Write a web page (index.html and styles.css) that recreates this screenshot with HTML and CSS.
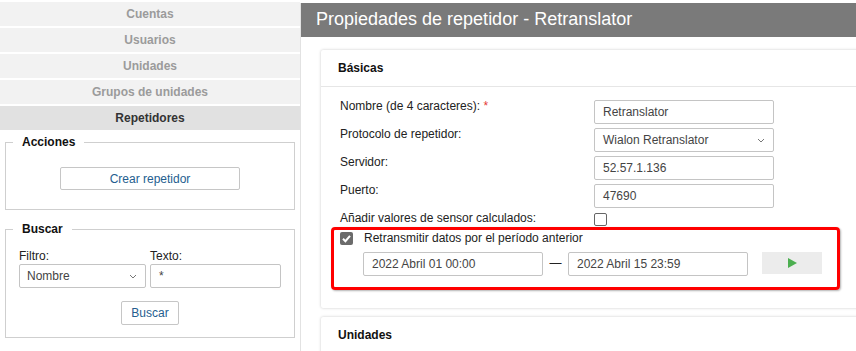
FILE: index.html
```html
<!DOCTYPE html>
<html lang="es">
<head>
    <meta charset="UTF-8">
    <title>Propiedades de repetidor - Retranslator</title>
    <link rel="stylesheet" href="styles.css">
</head>
<body>

<!-- panel izquierdo -->
<div class="sidebar">
    <div class="nav-item">Cuentas</div>
    <div class="nav-item">Usuarios</div>
    <div class="nav-item">Unidades</div>
    <div class="nav-item">Grupos de unidades</div>
    <div class="nav-item active">Repetidores</div>

    <fieldset class="box box-actions">
        <legend>Acciones</legend>
        <div class="box-center">
            <button type="button" class="btn btn-create">Crear repetidor</button>
        </div>
    </fieldset>

    <fieldset class="box box-search">
        <legend>Buscar</legend>
        <div class="search-fields">
            <div class="search-col">
                <label>Filtro:</label>
                <div class="select select-filter">
                    <span>Nombre</span>
                    <svg width="8" height="5" viewBox="0 0 8 5"><path d="M1 1l3 3 3-3" fill="none" stroke="#777" stroke-width="1"/></svg>
                </div>
            </div>
            <div class="search-col">
                <label>Texto:</label>
                <div class="input input-text">*</div>
            </div>
        </div>
        <div class="box-center search-actions">
            <button type="button" class="btn">Buscar</button>
        </div>
    </fieldset>
</div>

<!-- panel principal -->
<div class="main">
    <div class="main-header">Propiedades de repetidor - Retranslator</div>

    <div class="main-body">
        <div class="card">
            <div class="card-header">Básicas</div>
            <div class="card-body">
                <div class="row">
                    <div class="row-label">Nombre (de 4 caracteres): <span class="required">*</span></div>
                    <div class="input">Retranslator</div>
                </div>
                <div class="row">
                    <div class="row-label">Protocolo de repetidor:</div>
                    <div class="select">
                        <span>Wialon Retranslator</span>
                        <svg width="8" height="5" viewBox="0 0 8 5"><path d="M1 1l3 3 3-3" fill="none" stroke="#777" stroke-width="1"/></svg>
                    </div>
                </div>
                <div class="row">
                    <div class="row-label">Servidor:</div>
                    <div class="input">52.57.1.136</div>
                </div>
                <div class="row">
                    <div class="row-label">Puerto:</div>
                    <div class="input">47690</div>
                </div>
                <div class="row row-check">
                    <div class="row-label">Añadir valores de sensor calculados:</div>
                    <span class="checkbox"></span>
                </div>

                <!-- período anterior -->
                <div class="highlight">
                    <div class="check-line">
                        <span class="checkbox checked">
                            <svg width="13" height="13" viewBox="0 0 13 13"><path d="M3 6.8l2.4 2.4 4.6-5.4" fill="none" stroke="#fff" stroke-width="2"/></svg>
                        </span>
                        <span class="check-text">Retransmitir datos por el período anterior</span>
                    </div>
                    <div class="period">
                        <div class="input">2022 Abril 01 00:00</div>
                        <span class="dash">—</span>
                        <div class="input">2022 Abril 15 23:59</div>
                        <button type="button" class="play">
                            <svg width="9" height="10" viewBox="0 0 9 10"><path d="M0 0l9 5-9 5z" fill="#4caf50"/></svg>
                        </button>
                    </div>
                </div>
            </div>
        </div>

        <div class="card">
            <div class="card-header">Unidades</div>
        </div>
    </div>
</div>

</body>
</html>
```
FILE: styles.css
```css
body {
    margin: 0;
    display: flex;
    align-items: flex-start;
    height: 351px;
    overflow: hidden;
    font-family: "Liberation Sans", Arial, sans-serif;
    font-size: 12px;
    color: #222;
    background-color: #fff;
}
.sidebar {
    width: 300px;
    flex-shrink: 0;
    padding-top: 2px;
}
.nav-item {
    height: 24px;
    line-height: 24px;
    margin-bottom: 2px;
    background-color: #f2f2f2;
    color: #9b9b9b;
    font-weight: bold;
    text-align: center;
}
.nav-item.active {
    background-color: #e1e1e1;
    color: #333;
}
.box {
    margin: 0 5px;
    border: 1px solid #cfcfcf;
    padding: 0 13px;
    min-width: 0;
}
.box legend {
    margin-left: -6px;
    padding: 0 9px;
    font-weight: bold;
    line-height: 14px;
    color: #111;
}
.box-center {
    text-align: center;
}
.box-actions {
    margin-top: 5px;
    padding-top: 18px;
    padding-bottom: 19px;
}
.box-search {
    margin-top: 12px;
    padding-top: 13px;
    padding-bottom: 12px;
}
.btn {
    height: 24px;
    padding: 0 9px;
    border: 1px solid #c6c6c6;
    border-radius: 2px;
    background-color: #fff;
    color: #245e8f;
    font-family: inherit;
    font-size: 12px;
}
.btn-create {
    width: 180px;
    height: 23px;
}
.search-fields {
    display: flex;
    gap: 4px;
}
.search-col label {
    display: block;
    line-height: 14px;
    margin-bottom: 1px;
}
.search-actions {
    margin-top: 13px;
}
.main {
    flex: 1;
    min-width: 0;
    margin-top: 3px;
    border-left: 1px solid #e2e2e2;
    height: 348px;
    overflow: hidden;
}
.main-header {
    height: 34px;
    line-height: 33px;
    padding-left: 15px;
    background-color: #7a7a7a;
    color: #fff;
    font-size: 18px;
}
.main-body {
    padding: 13px 0 0 20px;
}
.card {
    width: 600px;
    background-color: #fff;
    box-shadow: 0 0 3px rgba(0, 0, 0, 0.22);
    border-radius: 2px;
    margin-bottom: 9px;
}
.card-header {
    height: 36px;
    line-height: 36px;
    padding-left: 17px;
    border-bottom: 1px solid #e6e6e6;
    font-weight: bold;
    color: #111;
}
.card-body {
    padding: 13px 0 18px 0;
}
.row {
    display: flex;
    align-items: flex-start;
    height: 24px;
    margin-bottom: 4px;
    padding-left: 19px;
}
.row-label {
    width: 254px;
    line-height: 13px;
}
.required {
    color: #e53935;
}
.input, .select {
    box-sizing: border-box;
    width: 180px;
    height: 24px;
    line-height: 22px;
    padding-left: 8px;
    border: 1px solid #c4c4c4;
    border-radius: 2px;
    color: #444;
    background-color: #fff;
}
.select {
    display: flex;
    justify-content: space-between;
    align-items: center;
    padding-right: 8px;
}
.search-col .select-filter {
    width: 127px;
    padding-left: 7px;
}
.search-col .input-text {
    width: 131px;
}
.row-check {
    height: 14px;
    margin-bottom: 1px;
}
.checkbox {
    box-sizing: border-box;
    display: inline-block;
    width: 13px;
    height: 13px;
    margin-top: 1px;
    border: 1px solid #666;
    border-radius: 2px;
    background-color: #fff;
}
.checkbox.checked {
    border: none;
    background-color: #6b6b6b;
    margin-top: 0;
}
.checkbox svg {
    display: block;
}
.highlight {
    box-sizing: border-box;
    width: 509px;
    margin-left: 10px;
    padding: 0 6px 11px 6px;
    border: 3px solid #f00;
    border-radius: 4px;
    box-shadow: 1px 1px 2px rgba(0, 0, 0, 0.3);
}
.check-line {
    display: flex;
    align-items: center;
    height: 16px;
}
.check-text {
    margin-left: 11px;
    color: #222;
}
.period {
    display: flex;
    align-items: flex-start;
    margin-top: 6px;
    padding-left: 23px;
}
.dash {
    width: 25px;
    line-height: 22px;
    text-align: center;
    color: #222;
}
.play {
    width: 60px;
    height: 22px;
    margin-left: 14px;
    border: none;
    background-color: #ececec;
    display: flex;
    align-items: center;
    justify-content: center;
    padding: 0;
}
.play svg {
    display: block;
}
```
